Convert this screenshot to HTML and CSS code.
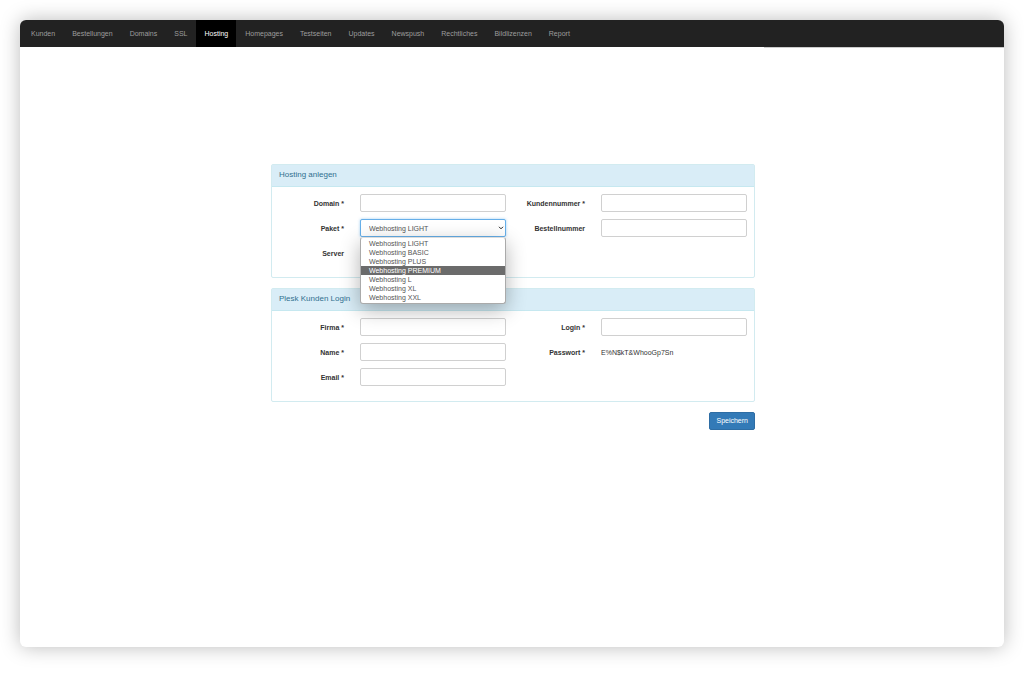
FILE: index.html
```html
<!DOCTYPE html>
<html lang="de">
<head>
<meta charset="utf-8">
<title>Hosting anlegen</title>
<link rel="stylesheet" href="styles.css">
</head>
<body>
<div class="window">
  <nav class="nav">
    <a href="#">Kunden</a>
    <a href="#">Bestellungen</a>
    <a href="#">Domains</a>
    <a href="#">SSL</a>
    <a href="#" class="active" aria-current="page">Hosting</a>
    <a href="#">Homepages</a>
    <a href="#">Testseiten</a>
    <a href="#">Updates</a>
    <a href="#">Newspush</a>
    <a href="#">Rechtliches</a>
    <a href="#">Bildlizenzen</a>
    <a href="#">Report</a>
  </nav>
  <main class="main">
    <form class="form">
      <section class="panel">
        <h2 class="panel-title">Hosting anlegen</h2>
        <div class="panel-body">
          <div class="column">
            <div class="row"><label for="domain">Domain *</label><input class="control" id="domain" type="text"></div>
            <div class="row">
              <label for="paket">Paket *</label>
              <div class="picker">
                <select class="control focused" id="paket"><option>Webhosting LIGHT</option></select>
                <svg class="arrow" viewBox="0 0 6 4" aria-hidden="true"><path d="M1 .8 3 2.8 5 .8"/></svg>
                <ul class="menu">
                  <li>Webhosting LIGHT</li>
                  <li>Webhosting BASIC</li>
                  <li>Webhosting PLUS</li>
                  <li class="highlight">Webhosting PREMIUM</li>
                  <li>Webhosting L</li>
                  <li>Webhosting XL</li>
                  <li>Webhosting XXL</li>
                </ul>
              </div>
            </div>
            <div class="row"><label for="server">Server</label><select class="control" id="server"></select></div>
          </div>
          <div class="column">
            <div class="row"><label for="kundennummer">Kundennummer *</label><input class="control" id="kundennummer" type="text"></div>
            <div class="row"><label for="bestellnummer">Bestellnummer</label><input class="control" id="bestellnummer" type="text"></div>
          </div>
        </div>
      </section>
      <section class="panel">
        <h2 class="panel-title">Plesk Kunden Login</h2>
        <div class="panel-body">
          <div class="column">
            <div class="row"><label for="firma">Firma *</label><input class="control" id="firma" type="text"></div>
            <div class="row"><label for="name">Name *</label><input class="control" id="name" type="text"></div>
            <div class="row"><label for="email">Email *</label><input class="control" id="email" type="email"></div>
          </div>
          <div class="column">
            <div class="row"><label for="login">Login *</label><input class="control" id="login" type="text"></div>
            <div class="row"><label for="passwort">Passwort *</label><output id="passwort">E%N$kT&amp;WhooGp7Sn</output></div>
          </div>
        </div>
      </section>
      <button class="save" type="submit">Speichern</button>
    </form>
  </main>
</div>
</body>
</html>
```
FILE: styles.css
```css
* { box-sizing: border-box; }

body {
  margin: 0;
  padding: 20px 20px 27px;
  min-height: 100vh;
  display: flex;
  background: #fff;
  color: #333;
  font: 7px/9px "Liberation Sans", Arial, sans-serif;
}

.window {
  flex: 1;
  border-radius: 6px;
  background: #fff;
  box-shadow: 0 0 20px rgba(0, 0, 0, .27);
}

.nav {
  position: relative;
  display: flex;
  flex-wrap: wrap;
  column-gap: 1px;
  padding-left: 3px;
  border-radius: 6px 6px 0 0;
  background: #222;
}

.nav::after {
  content: "";
  position: absolute;
  top: 100%;
  right: 0;
  width: 240px;
  height: 1px;
  background: #ccc;
}

.nav a {
  padding: 9px 8px;
  color: #9d9d9d;
  text-decoration: none;
}

.nav .active {
  background: #000;
  color: #fff;
}

.main { padding: 117px 0 20px 2px; }

.form {
  display: flex;
  flex-direction: column;
  gap: 10px;
  max-width: 484px;
  margin: 0 auto;
}

.panel {
  border: 1px solid #d2ebf0;
  border-radius: 2px;
}

.panel-title {
  margin: 0;
  padding: 5px 7px 6px;
  border-bottom: 1px solid #c6e8f0;
  background: #d9edf7;
  color: #31708f;
  font-size: 8px;
  font-weight: 400;
  line-height: 10px;
}

.panel-body {
  display: grid;
  grid-template-columns: 1fr 1fr;
  padding: 7px 0 15px;
}

.column {
  display: flex;
  flex-direction: column;
  gap: 7px;
}

.row {
  display: grid;
  grid-template-columns: 72px 1fr;
  column-gap: 16px;
  align-items: center;
  min-height: 18px;
  padding-right: 7px;
}

.row label {
  text-align: right;
  font-weight: 700;
  white-space: nowrap;
}

.control {
  display: block;
  width: 100%;
  height: 18px;
  margin: 0;
  padding: 0 8px;
  border: 1px solid #d0d0d0;
  border-radius: 2px;
  outline: 0;
  appearance: none;
  background: #fff;
  color: #555;
  font: inherit;
}

.focused {
  border-color: #66afe9;
  box-shadow: 0 0 3px rgba(102, 175, 233, .6);
}

.picker { position: relative; }

.arrow {
  position: absolute;
  top: 7px;
  right: 2px;
  width: 6px;
  height: 4px;
  fill: none;
  stroke: #222;
}

.menu {
  position: absolute;
  z-index: 1;
  top: 100%;
  left: 0;
  right: 0;
  margin: 0;
  padding: 1px 0;
  border: 1px solid #aaa;
  border-top-color: #ddd;
  border-radius: 3px;
  background: #fff;
  box-shadow: 0 6px 20px rgba(0, 0, 0, .3);
  color: #555;
  list-style: none;
}

.menu li { padding: 0 8px; }

.menu .highlight {
  background: #6b6b6b;
  color: #fff;
}

.save {
  align-self: flex-end;
  padding: 3px 6px 4px;
  border: 1px solid #2e6da4;
  border-radius: 2px;
  background: #337ab7;
  color: #fff;
  font: inherit;
}
```
